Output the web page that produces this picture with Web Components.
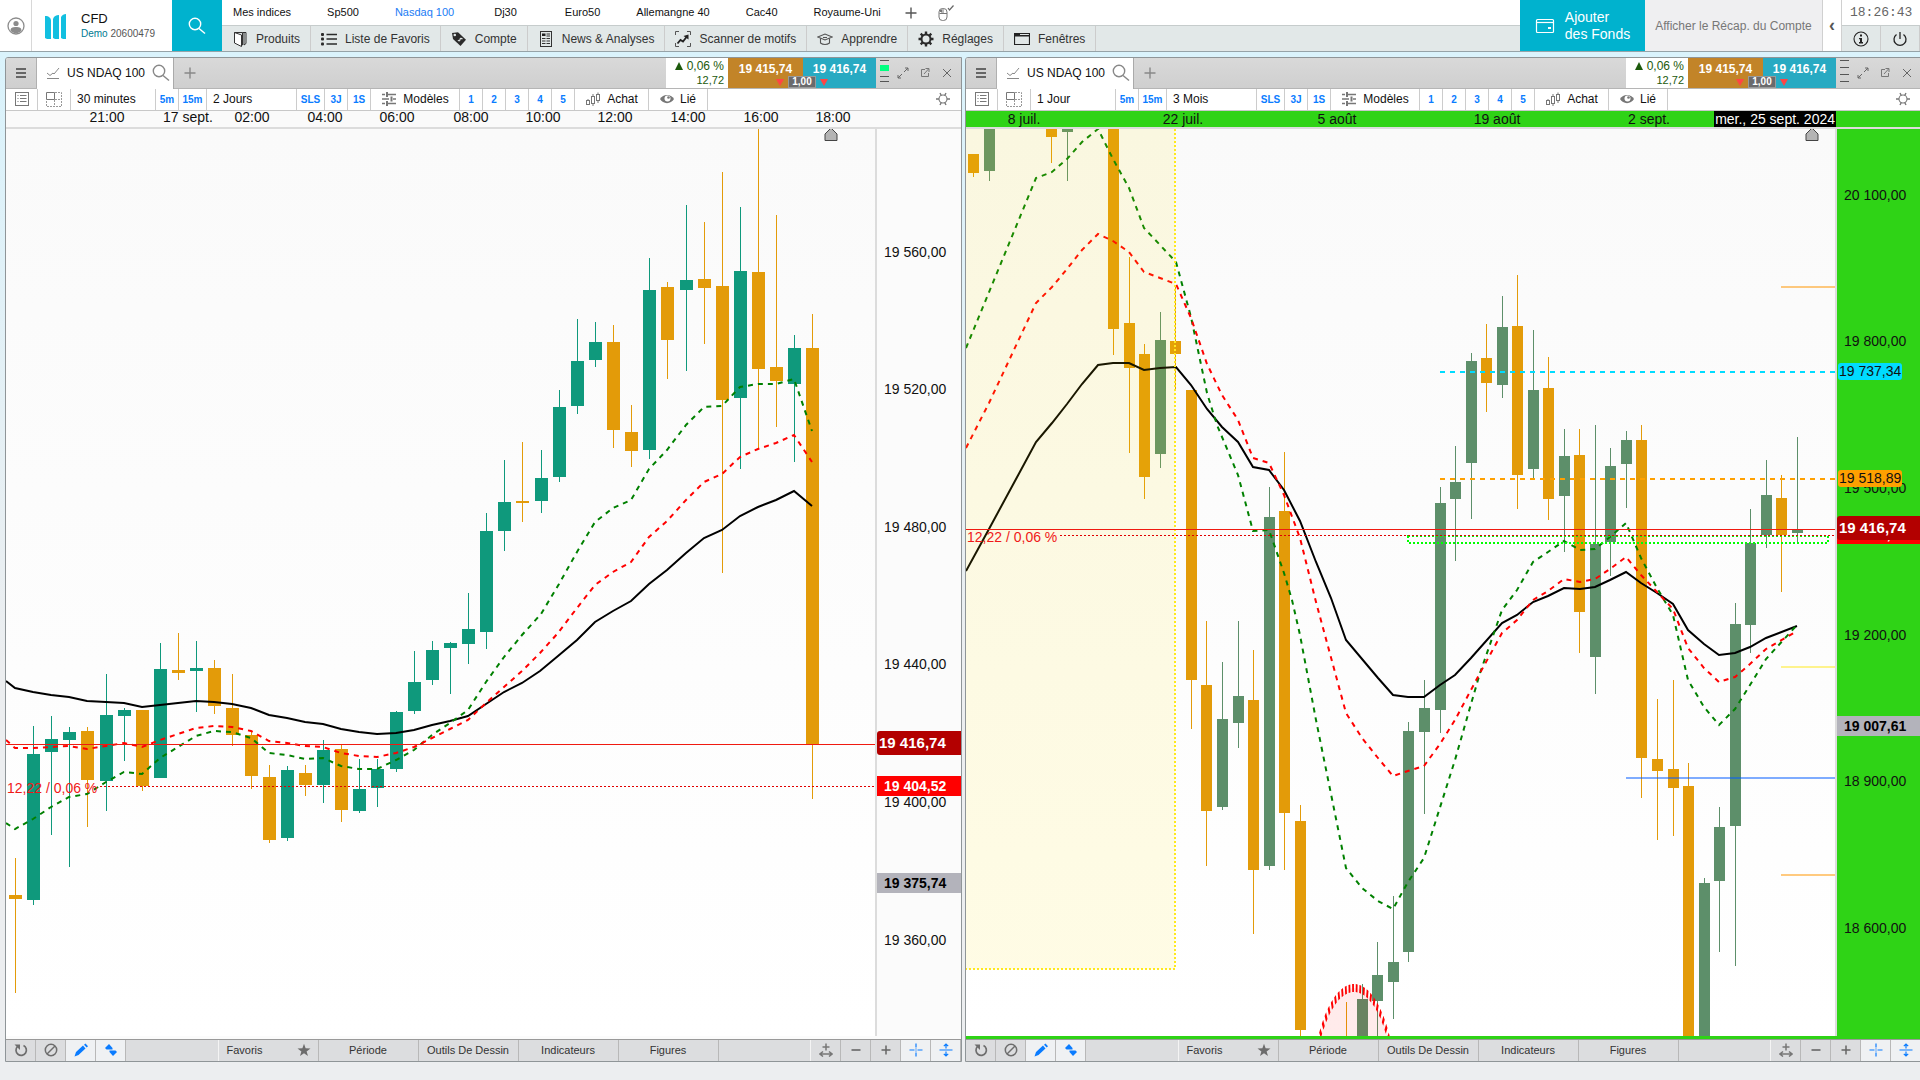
<!DOCTYPE html>
<html lang="fr">
<head>
<meta charset="utf-8">
<title>CFD - US NDAQ 100</title>
<style>
  html, body { height: 100%; }
  body {
    margin: 0;
    overflow: hidden;
    background: #eceef0;
    font-family: "Liberation Sans", Arial, sans-serif;
    font-size: 12px;
    color: #111;
  }
</style>
</head>
<body>
<trading-app></trading-app>

<script>
// ---------- icons ----------
const icons = {
  user: [18, '<circle cx="9" cy="9" r="8" fill="none" stroke="#8c8c8c" stroke-width="1.3"/><circle cx="9" cy="6.5" r="2.6" fill="#8c8c8c"/><path d="M3.5 13.5c0-3 2.5-3.5 5.500-3.500s5.500.5 5.500 3.500c-1.300 1.800-3.300 2.800-5.500 2.800s-4.200-1-5.500-2.800z" fill="#8c8c8c"/>'],
  logo: [26, '<g fill="#12bfe0"><path d="M2 3c4 0 6 2 6 5v18H4l-2-1z"/><path d="M10 6c1-3 3-4 6-4v24h-4l-2-1z"/><path d="M18 4c1-2 3-3 5-3v25h-3l-2-1z"/></g>'],
  search: [18, '<circle cx="7" cy="7" r="5.700" fill="none" stroke="currentColor" stroke-width="1.400"/><path d="M11 11.500l6 5" stroke="currentColor" stroke-width="1.500"/>'],
  products: [16, '<g fill="none" stroke="#333"><path d="M2.500 1.500l7 2.500v11.500l-7-3.500z" fill="#fff"/><path d="M2.500 1.500h8v2M9.500 14h1V2.500M10.500 1.500h3.500v11l-2 1.500V1.500"/></g>'],
  list: [16, '<g stroke="#2b2b2b" stroke-width="1.400"><path d="M5.500 3.500H16M5.500 8H16M5.500 13H16"/></g><g fill="#2b2b2b"><rect y="2" width="3" height="3" rx="1"/><rect y="6.500" width="3" height="3" rx="1"/><rect y="11.500" width="3" height="3" rx="1"/></g>'],
  tag: [16, '<path d="M1 2l6-.8 8 7.600-5.500 6.200L2 8z" fill="#2b2b2b"/><circle cx="3.800" cy="4" r="1.300" fill="#e2e8e8"/><path d="M7 9c1 1.500 2 .5 2-.5s1-2 2.500-.3" fill="none" stroke="#e2e8e8" stroke-width="1.200"/>'],
  news: [16, '<rect x="2.500" y=".5" width="11" height="15" fill="none" stroke="#333"/><rect x="4" y="2.500" width="3.500" height="2.500" fill="#222"/><path d="M8.500 3h3.500M8.500 5h3.500M4 7.500h3.500M8.500 7.500h3.500M4 10h3.500M8.500 10h3.500M4 12.500h3.500M8.500 12.500h3.500" stroke="#333"/>'],
  scan: [16, '<path d="M.5 4V.5H4M12 .5h3.500V4M15.500 12v3.500H12M4 15.500H.5V12" fill="none" stroke="#555"/><path d="M2.500 12.500l3-3.500 2.500 1.500 3.500-4.500" fill="none" stroke="#222" stroke-width="1.800"/><path d="M13.500 3.500v5l-5-3.500z" fill="#222"/>'],
  learn: [16, '<g fill="none" stroke="#555" stroke-width="1.100"><path d="M.8 6L8 3l7.200 3L8 9z"/><path d="M3.500 7.300V12c2.500 2 6.500 2 9 0V7.300M6 6.500h4"/></g>'],
  gear: [16, '<circle cx="8" cy="8" r="4.500" fill="none" stroke="#2b2b2b" stroke-width="2"/><g stroke="#2b2b2b" stroke-width="2.400"><path d="M8 .5v2.500M8 13v2.500M.5 8H3M13 8h2.500M2.700 2.700l1.800 1.800M11.500 11.500l1.800 1.800M13.300 2.700l-1.800 1.800M4.500 11.500l-1.800 1.800"/></g>'],
  window: [16, '<path d="M.5 2.500h15v11H.5z" fill="none" stroke="#222" stroke-width="1.200"/><path d="M0 2h6v2h10v1.500H0z" fill="#222"/>'],
  plus: [12, '<path d="M6 .5v11M.5 6h11" stroke="currentColor" stroke-width="1.400"/>'],
  mouse: [16, '<rect x="1" y="3.500" width="8" height="12" rx="3.500" fill="none" stroke="#777"/><path d="M1.500 8.500h7.500M5 3.500v5M2.500 7V5M3.500 7.500V4.500" stroke="#777"/><path d="M10 3l1.500 2 4-4.500" fill="none" stroke="#666" stroke-width="1.200"/>'],
  wallet: [20, '<g fill="none" stroke="#fff" stroke-width="1.200"><rect x="1.500" y="3.500" width="17" height="13" rx="1"/><path d="M1.500 6.500h17"/></g><rect x="13" y="11" width="3" height="2" fill="#fff"/>'],
  info: [16, '<circle cx="8" cy="8" r="7" fill="none" stroke="#222" stroke-width="1.100"/><path d="M7 3.500h2v2H7zM6 7h3v4h1v1.500H6V11h1V8.200H6z" fill="#222"/>'],
  power: [16, '<path d="M8 1v7M4.500 3.500a6 6 0 1 0 7 0" fill="none" stroke="#222" stroke-width="1.300"/>'],
  burger: [12, '<path d="M1 2h10M1 6h10M1 10h10" stroke="#666" stroke-width="2"/>'],
  trend: [14, '<path d="M1 7l3 2.500 3-2.500 1 1 5-6" fill="none" stroke="#888"/><path d="M1 12.500h12" stroke="#888"/>'],
  rows: [14, '<rect x=".5" y=".5" width="13" height="13" fill="none" stroke="#777"/><path d="M2.500 3.500h1M2.500 6.500h1M2.500 9.500h1M5 3.500h6.500M5 6.500h6.500M5 9.500h6.500" stroke="#777"/>'],
  layout: [16, '<path d="M.5 1.500h8v7h-8z" fill="none" stroke="#777"/><path d="M9 1.500h6.500v14H.5V9M8.500 9v6M9 8.500h6" fill="none" stroke="#999" stroke-dasharray="2 1"/>'],
  sliders: [16, '<path d="M1 3.500h3M7 3.500h8M1 8h7M12 8h3M1 12.500h3M7 12.500h8" stroke="#777" stroke-width="1.500"/><path d="M6 1v5M10.500 5.500v5M6 10v5" stroke="#777" stroke-width="2"/>'],
  candles: [16, '<g fill="none" stroke="#777"><rect x="1.500" y="9.500" width="3" height="4"/><rect x="6.500" y="5.500" width="3" height="7"/><rect x="11.500" y="3.500" width="3" height="6"/><path d="M3 8v1.500M8 3v2.500M8 12.500V15M13 1.500v2M13 9.500V12"/></g>'],
  eye: [14, '<path d="M0 7c3-5.500 11-5.500 14 0-3 5.500-11 5.500-14 0z" fill="#777"/><circle cx="7.500" cy="6.500" r="3" fill="#fff"/><circle cx="8.500" cy="5.500" r="1.300" fill="#777"/>'],
  cog: [14, '<circle cx="7" cy="7" r="4" fill="none" stroke="#777" stroke-width="1.100"/><path d="M4 1l1.300 2.500M10 1L8.700 3.500M4 13l1.300-2.500M10 13l-1.300-2.500M0 7h3M11 7h3" stroke="#777" stroke-width="1.400"/>'],
  expand: [12, '<path d="M7 5l4-4M8 1h3v3M5 7l-4 4M1 8v3h3" fill="none" stroke="#666"/>'],
  popout: [12, '<path d="M6 2.500H2.500v7h7V6M5 7l4.500-5M6.500 1.500H10V5" fill="none" stroke="#777"/>'],
  close: [12, '<path d="M2 2l8 8M10 2l-8 8" stroke="#666"/>'],
  refresh: [14, '<path d="M9.500 2.500A5.200 5.200 0 1 1 3.500 3.500" fill="none" stroke="#6d6d6d" stroke-width="1.700"/><path d="M.5 1.500h5.500V7z" fill="#6d6d6d"/>'],
  forbid: [14, '<circle cx="7" cy="7" r="5.700" fill="none" stroke="#6d6d6d" stroke-width="1.500"/><path d="M3 11l8-8" stroke="#6d6d6d" stroke-width="1.500"/>'],
  pencil: [14, '<path d="M.5 13.500l1.500-4.500L9 2.500l2.500 3-7 6.500zM10 1.700L11.500.5l2.500 2.800-1.300 1.200z" fill="#0a7cff"/>'],
  updown: [14, '<path d="M1 5l4-4 3.500 4v1.500H2.500z" fill="#0a7cff"/><path d="M13 9l-4 4-3.500-4V7.500h6z" fill="#0a7cff"/>'],
  star: [14, '<path d="M7 .8l1.600 4.400 4.900.2-3.900 3 1.400 4.600L7 10.300 3 13l1.400-4.600-3.900-3 4.900-.2z" fill="#6d6d6d"/>'],
  fit: [14, '<path d="M7 .5v7M3.500 4h7M1 11h12M4 8.500L1 11l3 2.500M10 8.500l3 2.500-3 2.500" fill="none" stroke="#777" stroke-width="1.500"/>'],
  minus: [12, '<path d="M1.500 6h9" stroke="#666" stroke-width="1.600"/>'],
  add: [12, '<path d="M6 1.500v9M1.500 6h9" stroke="#666" stroke-width="1.500"/>'],
  cross: [14, '<path d="M7 .5v4M7 9.500v4M.5 7h5M8.500 7h5M7 5.500v1M7 7.500v1" stroke="#0a7cff" stroke-width="1.200"/>'],
  vresize: [14, '<path d="M.5 7h13M7 1v4.500M7 8.500V13M4.800 3.200L7 1l2.200 2.200M4.800 10.800L7 13l2.200-2.200" fill="none" stroke="#0a7cff" stroke-width="1.200"/>']
};

class UiIcon extends HTMLElement {
  constructor() {
    super();
    this.attachShadow({ mode: "open" });
  }

  connectedCallback() {
    const [size, body] = icons[this.getAttribute("name")];
    this.shadowRoot.innerHTML = `
      <style>
        :host { display: inline-flex; flex: none; }
        svg { display: block; }
      </style>
      <svg width="${size}" height="${size}" viewBox="0 0 ${size} ${size}" aria-hidden="true">${body}</svg>`;
  }
}
customElements.define("ui-icon", UiIcon);

// ---------- one cell of a bar, used in the menu and in the chart toolbars ----------
const barCell = document.createElement("template");
barCell.innerHTML = `
  <style>
    :host { display: flex; flex: none; box-sizing: border-box; border-right: 1px solid #ccc; }
    button {
      display: flex;
      flex: 1;
      align-items: center;
      justify-content: center;
      gap: var(--cell-gap, 6px);
      margin: 0;
      padding: 0 var(--cell-pad, 0px) var(--cell-bottom, 0px);
      border: 0;
      background: none;
      font: inherit;
      color: inherit;
      white-space: nowrap;
    }
    :host([start]) button { justify-content: flex-start; }
    :host([quick]) { width: 23px; color: #0a7cff; font-size: 10px; font-weight: bold; }
    :host([square]) { width: 30px; }
    :host([on]) { background: #eff1f3; }
  </style>
  <button type="button"><slot></slot></button>
`;
customElements.define(
  "bar-cell",
  class BarCell extends HTMLElement {
    constructor() {
      super();
      this.attachShadow({ mode: "open" }).appendChild(barCell.content.cloneNode(true));
    }
  }
);

// ---------- header ----------
const header = document.createElement("template");
header.innerHTML = `
  <style>
    :host {
      display: flex;
      height: 51px;
      background: #fff;
      border-bottom: 1px solid #96a3a8;
    }
    button { border: 0; margin: 0; font: inherit; padding: 0; display: flex; align-items: center; justify-content: center; }
    .user { width: 32px; background: #fff; border-right: 1px solid #d8d8d8; box-sizing: border-box; }
    .account { display: flex; width: 140px; gap: 12px; align-items: center; box-sizing: border-box; padding-left: 11px; }
    .account h1 { margin: 0; font-size: 13px; line-height: 16px; font-weight: normal; color: #111; }
    .account p { margin: 0; font-size: 10px; line-height: 14px; color: #555; }
    .account p a { color: #007a92; text-decoration: none; }
    .search { width: 50px; background: #00b2ce; color: #fff; }
    .main { flex: 1; min-width: 0; display: flex; flex-direction: column; }
    .indices { display: flex; height: 25px; align-items: center; font-size: 11px; line-height: 25px; color: #888; border-bottom: 1px solid #c6cccc; }
    .indices a { color: #111; text-decoration: none; padding: 0 18px; height: 25px; white-space: nowrap; }
    .indices a:first-child { padding-left: 11px; }
    .indices a.on { color: #1a7cf5; }
    .indices a.short { padding: 0 30px 0 22px; }
    .indices button { background: none; color: #555; width: 24px; height: 25px; }
    .indices button + button { width: 46px; }
    .menu { display: flex; height: 25px; background: #e2e8e8; color: #333; --cell-pad: 10px; --cell-gap: 8px; }
    .funds { width: 125px; gap: 10px; background: #00b2ce; color: #fff; font-size: 14px; line-height: 17px; text-align: left; }
    .recap { width: 177px; background: #efeff1; color: #777; font-size: 12px; }
    .fold { width: 20px; background: #fff; color: #555; font-size: 18px; font-weight: bold; border: 1px solid #d0d0d0; border-width: 0 1px; }
    .side { width: 78px; }
    .clock { height: 25px; border-bottom: 1px solid #c6cccc; font: 13px/26px "Liberation Mono", monospace; text-align: center; color: #666; padding: 0 8px; }
    .pair { display: flex; height: 25px; background: #e2e8e8; }
    .pair bar-cell { flex: 1; }
  </style>
  <button class="user" aria-label="Profil"><ui-icon name="user"></ui-icon></button>
  <div class="account">
    <ui-icon name="logo"></ui-icon>
    <div><h1>CFD</h1><p><a href="#demo">Demo</a> 20600479</p></div>
  </div>
  <button class="search" aria-label="Rechercher"><ui-icon name="search"></ui-icon></button>
  <div class="main">
    <nav class="indices">
      <a href="#">Mes indices</a><a href="#">Sp500</a><a href="#" class="on">Nasdaq 100</a><a href="#" class="short">Dj30</a><a href="#">Euro50</a><a href="#">Allemangne 40</a><a href="#">Cac40</a><a href="#">Royaume-Uni</a>
      <button aria-label="Ajouter"><ui-icon name="plus"></ui-icon></button>
      <button aria-label="Souris"><ui-icon name="mouse"></ui-icon></button>
    </nav>
    <nav class="menu">
      <bar-cell><ui-icon name="products"></ui-icon>Produits</bar-cell>
      <bar-cell><ui-icon name="list"></ui-icon>Liste de Favoris</bar-cell>
      <bar-cell><ui-icon name="tag"></ui-icon>Compte</bar-cell>
      <bar-cell><ui-icon name="news"></ui-icon>News &amp; Analyses</bar-cell>
      <bar-cell><ui-icon name="scan"></ui-icon>Scanner de motifs</bar-cell>
      <bar-cell><ui-icon name="learn"></ui-icon>Apprendre</bar-cell>
      <bar-cell><ui-icon name="gear"></ui-icon>Réglages</bar-cell>
      <bar-cell><ui-icon name="window"></ui-icon>Fenêtres</bar-cell>
    </nav>
  </div>
  <button class="funds"><ui-icon name="wallet"></ui-icon><span>Ajouter<br>des Fonds</span></button>
  <button class="recap">Afficher le Récap. du Compte</button>
  <button class="fold" aria-label="Replier">‹</button>
  <div class="side">
    <div class="clock">18:26:43</div>
    <div class="pair">
      <bar-cell><ui-icon name="info"></ui-icon></bar-cell>
      <bar-cell><ui-icon name="power"></ui-icon></bar-cell>
    </div>
  </div>
`;
customElements.define(
  "app-header",
  class AppHeader extends HTMLElement {
    constructor() {
      super();
      this.attachShadow({ mode: "open" }).appendChild(header.content.cloneNode(true));
    }
  }
);

// ---------- chart data ----------
// All the points share one space: the plot is 869 x 907, its corner is at 6,129.
const PLOT = { x: 6, y: 129, w: 869, h: 907 };

// candle: left edge, high, body top, body bottom, low, u(p) or d(own)
const charts = {
  m30: {
    period: "30 minutes",
    range: "2 Jours",
    up: "#0f997c",
    down: "#e39b09",
    width: 13,
    marker: 831,
    ladder: true,
    times: [[107, "21:00"], [188, "17 sept."], [252, "02:00"], [325, "04:00"], [397, "06:00"], [471, "08:00"], [543, "10:00"], [615, "12:00"], [688, "14:00"], [761, "16:00"], [833, "18:00"]],
    prices: [[252, "19 560,00"], [389, "19 520,00"], [527, "19 480,00"], [664, "19 440,00"], [802, "19 400,00"], [940, "19 360,00"]],
    tags: [[743, "19 416,74", "last"], [786, "19 404,52", "open"], [883, "19 375,74", "cursor"]],
    note: 788,
    last: 744.5,
    open: 786.5,
    candles: `9 858 895 899 993 d|27 726 754 900 905 u|45 716 739 752 835 u|63 727 732 740 867 u|81 727 731 780 827 d
      |100 674 715 781 811 u|118 708 710 716 761 u|136 710 710 786 791 d|154 643 669 778 778 u|172 633 670 673 680 d
      |190 641 668 671 712 u|208 660 668 706 714 d|226 674 708 735 746 d|245 731 735 776 789 d|263 765 777 840 843 d
      |281 766 770 838 841 u|299 765 773 785 796 d|317 740 750 785 803 u|335 745 749 810 822 d|353 759 789 811 813 u
      |371 759 769 788 807 u|390 711 712 769 772 u|408 651 682 711 714 u|426 641 650 680 685 u|444 642 643 648 694 u
      |462 593 629 644 664 u|480 513 531 632 649 u|498 460 502 531 551 u|516 442 501 503 522 d|535 450 478 501 513 u
      |553 390 407 477 482 u|571 319 361 406 414 u|589 322 342 360 367 u|607 325 342 430 448 d|625 405 432 451 467 d
      |643 258 290 450 459 u|661 282 287 340 379 d|680 205 280 290 371 u|698 222 279 288 344 d|716 172 286 400 573 d
      |734 207 271 398 469 u|752 128 272 369 449 d|770 215 367 381 427 d|788 335 348 384 462 u|806 314 348 744 799 d`,
    black: "6,681 15,688 33,692 51,695 69,697 87,701 106,702 124,703 142,707 160,705 178,703 196,701 214,702 232,704 251,708 269,715 287,718 305,722 323,724 341,729 359,732 377,734 396,733 414,730 432,725 450,721 468,716 486,704 504,692 522,683 540,671 558,656 577,640 595,622 613,611 631,601 649,584 667,570 686,553 704,538 722,530 740,516 758,507 776,500 794,491 812,506",
    red: "6,740 15,748 33,748 51,747 69,746 87,749 106,746 124,743 142,747 160,740 178,734 196,728 214,726 232,727 251,731 269,741 287,743 305,746 323,747 341,753 359,756 377,757 396,753 414,747 432,738 450,729 468,720 486,703 504,687 522,671 540,653 558,633 577,608 595,585 613,572 631,562 649,537 667,521 686,500 704,482 722,474 740,457 758,449 776,443 794,435 812,462",
    green: "6,823 15,829 33,819 51,807 69,797 87,794 106,782 124,772 142,774 160,758 178,747 196,736 214,731 232,732 251,738 269,753 287,755 305,759 323,758 341,766 359,769 377,769 396,760 414,750 432,735 450,723 468,710 486,682 504,657 522,635 541,614 559,584 577,552 595,522 613,508 631,500 649,469 667,450 686,425 704,407 722,406 740,387 758,384 776,384 794,379 812,431",
    drawings: ""
  },
  d1: {
    period: "1 Jour",
    range: "3 Mois",
    up: "#5d8f6a",
    down: "#e39b09",
    width: 11,
    marker: 852,
    times: [[64, "8 juil."], [223, "22 juil."], [377, "5 août"], [537, "19 août"], [689, "2 sept."]],
    date: "mer., 25 sept. 2024",
    prices: [[195, "20 100,00"], [341, "19 800,00"], [488, "19 500,00"], [635, "19 200,00"], [781, "18 900,00"], [928, "18 600,00"]],
    tags: [[534, "19 404,52", "open"], [371, "19 737,34", "cyan"], [478, "19 518,89", "orange"], [528, "19 416,74", "last"], [726, "19 007,61", "cursor"]],
    note: 537,
    last: 529.5,
    open: 535.5,
    candles: `8 154 154 173 177 d|24 120 120 171 181 u|86 120 120 137 163 d|102 120 120 132 181 u|148 120 120 329 355 d
      |164 257 323 368 453 d|179 344 354 477 499 d|195 312 340 454 468 u|210 285 341 354 391 d|226 390 390 680 729 d
      |241 621 685 811 866 d|257 662 719 807 810 u|273 621 696 723 748 u|288 650 700 870 934 d|304 487 517 866 870 u
      |319 452 511 813 870 d|335 805 821 1030 1040 d|381 1002 1038 1040 1040 d|397 984 999 1040 1040 u|412 942 975 1001 1040 u
      |428 896 962 982 1019 u|443 722 731 952 962 u|459 680 708 732 814 u|475 487 503 710 733 u|490 446 482 499 561 u
      |506 353 361 463 519 u|521 324 358 383 412 d|537 296 327 385 398 u|552 275 326 475 509 d|568 330 390 469 478 u
      |583 357 388 499 520 d|599 429 456 496 552 u|614 429 455 612 653 d|630 425 544 657 694 u|645 448 466 542 576 u
      |661 431 440 464 508 u|676 425 440 758 798 d|692 699 759 771 840 d|708 680 769 788 836 d|723 763 786 1040 1040 d
      |739 878 883 1040 1040 u|754 807 827 881 952 u|770 603 624 826 966 u|785 509 543 625 653 u|801 460 495 535 548 u
      |816 475 498 535 592 d|832 437 530 533 544 u`,
    black: "6,571 29,529 76,442 92,423 107,404 122,384 138,365 153,363 169,363 184,370 200,368 216,367 231,385 247,409 262,427 278,442 293,467 309,470 324,490 340,521 356,562 371,598 386,640 418,678 433,695 448,697 464,697 480,685 495,675 511,658 542,623 557,615 573,602 588,596 604,588 620,589 635,587 650,580 666,572 681,583 697,593 713,604 728,630 744,644 759,655 775,653 790,647 806,638 837,626",
    red: "6,448 29,403 76,303 92,287 107,269 122,250 138,234 153,241 169,252 184,272 200,278 216,284 231,318 247,364 262,395 278,420 293,458 309,463 324,495 340,538 356,602 386,713 402,738 418,758 433,776 448,771 464,766 480,744 495,720 520,673 542,633 557,620 573,600 588,591 604,579 620,582 635,579 650,569 666,557 681,575 697,592 713,609 728,648 744,668 759,682 775,677 790,664 806,649 837,631",
    green: "6,348 76,178 92,172 107,159 122,142 138,129 153,159 169,188 184,228 200,245 216,262 231,317 247,393 257,425 278,475 293,531 309,530 324,573 332,600 340,635 356,720 386,868 402,888 418,901 433,909 448,882 464,858 495,760 511,704 520,673 542,610 557,590 573,562 588,552 604,541 620,550 635,549 650,537 666,523 681,558 697,588 713,615 728,680 744,707 759,725 775,709 790,685 806,659 837,625",
    drawings: `
      <path d="M480 372H876" stroke="#00dcff" stroke-width="2" stroke-dasharray="5 5"/>
      <path d="M480 479H876" stroke="#ffa000" stroke-width="2" stroke-dasharray="5 5"/>
      <path d="M6 129H215V969H6z" fill="#ffdd00" fill-opacity=".1"/>
      <path d="M215 129V969H6" fill="none" stroke="#ffe91e" stroke-width="2" stroke-dasharray="2 2"/>
      <path d="M448 536H868V543H448z" fill="none" stroke="#00ff00" stroke-width="2" stroke-dasharray="2 2"/>
      <path d="M821 287H876M821 875H876" stroke="#ff9600" stroke-opacity=".5" stroke-width="2"/>
      <path d="M821 667H876" stroke="#ffe91e" stroke-opacity=".5" stroke-width="2"/>
      <path d="M666 778H876" stroke="#005aff" stroke-opacity=".5" stroke-width="2"/>
      <g transform="translate(394 1108) scale(.3 1)">
        <ellipse rx="142" ry="120" fill="#f00" fill-opacity=".08" stroke="#f00" stroke-width="8" stroke-dasharray="6 6"/>
      </g>`
  }
};

// ---------- candle chart ----------
class CandleChart extends HTMLElement {
  constructor() {
    super();
    this.attachShadow({ mode: "open" });
  }

  candle(text, c) {
    const [x, high, top, bottom, low, dir] = text.trim().split(" ");
    const mid = Number(x) + c.width / 2;
    const color = dir === "u" ? c.up : c.down;
    return `
      <path d="M${mid} ${high}V${low}" stroke="${color}"/>
      <rect x="${x}" y="${top}" width="${c.width}" height="${bottom - top}" fill="${color}"/>`;
  }

  connectedCallback() {
    const c = charts[this.getAttribute("data")];
    const end = PLOT.x + PLOT.w;
    const m = c.marker;
    this.shadowRoot.innerHTML = `
      <style>
        :host { display: block; position: relative; overflow: hidden; background: linear-gradient(#fafafa, #fff); }
        svg { display: block; width: 100%; height: 100%; }
        polyline { fill: none; stroke-width: 2; }
        .dashed { stroke-dasharray: 5 5; }
        span {
          position: absolute;
          left: 1px;
          margin-top: -8px;
          font-size: 14px;
          line-height: 16px;
          color: #f01818;
        }
      </style>
      <svg viewBox="${PLOT.x} ${PLOT.y} ${PLOT.w} ${PLOT.h}" preserveAspectRatio="none">
        ${c.candles.split("|").map(t => this.candle(t, c)).join("")}
        <polyline points="${c.black}" stroke="#000"/>
        <polyline class="dashed" points="${c.green}" stroke="#008000"/>
        <polyline class="dashed" points="${c.red}" stroke="#f00"/>
        ${c.drawings}
        <path d="M6 ${c.last}H${end}" stroke="#f01a10"/>
        <path d="M100 ${c.open}H${end}" stroke="#e00000" stroke-dasharray="2 2"/>
        <path d="M${m - 6} 140.500V134l6-6 6 6v6.500z" fill="#b4b4b4" stroke="#444"/>
      </svg>
      <span style="top: ${(c.note - PLOT.y) / PLOT.h * 100}%">12,22 / 0,06 %</span>`;
  }
}
customElements.define("candle-chart", CandleChart);

// ---------- axes ----------
class TimeAxis extends HTMLElement {
  constructor() {
    super();
    this.attachShadow({ mode: "open" });
  }

  connectedCallback() {
    const c = charts[this.getAttribute("data")];
    const labels = c.times.map(([x, t]) => `<span style="left: ${(x - PLOT.x) / PLOT.w * 100}%">${t}</span>`).join("");
    this.shadowRoot.innerHTML = `
      <style>
        :host {
          display: block;
          height: 16px;
          padding-right: 86px;
          background: var(--axis, #fafafa);
          border-bottom: 2px solid #dcdcdc;
          font-size: 14px;
          line-height: var(--time-line, 13px);
          white-space: nowrap;
        }
        div { position: relative; height: 16px; }
        span { position: absolute; width: 80px; margin-left: -40px; text-align: center; }
        b { position: absolute; right: -1px; padding: 0 1px; font-weight: normal; background: #000; color: #fff; line-height: 16px; }
      </style>
      <div>${labels}${c.date ? `<b>${c.date}</b>` : ""}</div>`;
  }
}
customElements.define("time-axis", TimeAxis);

class PriceAxis extends HTMLElement {
  constructor() {
    super();
    this.attachShadow({ mode: "open" });
  }

  connectedCallback() {
    const c = charts[this.getAttribute("data")];
    const top = y => `top: ${(y - PLOT.y) / PLOT.h * 100}%`;
    this.shadowRoot.innerHTML = `
      <style>
        :host {
          display: block;
          position: relative;
          box-sizing: border-box;
          width: 86px;
          border-left: 2px solid #dcdcdc;
          background: var(--axis, #fbfbfb);
          font-size: 14px;
          overflow: hidden;
        }
        span { position: absolute; left: 7px; line-height: 16px; margin-top: -8px; }
        .last, .open, .cursor { left: 0; right: 0; padding-left: 7px; font-weight: bold; }
        .last { background: #b30000; color: #fff; font-size: 15px; line-height: 24px; margin-top: -12px; padding-left: 2px; border-radius: 3px 0 0 3px; }
        .open { background: #f00; color: #fff; line-height: 20px; margin-top: -10px; }
        .cursor { background: #b3b3bb; line-height: 20px; margin-top: -10px; color: #000; }
        .cyan, .orange { left: 1px; padding: 0 1px; border-radius: 3px; background: #00dcff; line-height: 17px; }
        .orange { background: #ffa000; }
      </style>
      ${c.prices.map(([y, t]) => `<span style="${top(y)}">${t}</span>`).join("")}
      ${c.tags.map(([y, t, kind]) => `<span class="${kind}" style="${top(y)}">${t}</span>`).join("")}`;
  }
}
customElements.define("price-axis", PriceAxis);

// ---------- quote box of the tab bar ----------
class QuoteBox extends HTMLElement {
  constructor() {
    super();
    this.attachShadow({ mode: "open" });
  }

  connectedCallback() {
    this.shadowRoot.innerHTML = `
      <style>
        :host { display: flex; height: 30px; }
        .change { width: 62px; box-sizing: border-box; padding: 1px 4px 0 0; background: #fff; color: #1c5a0c; text-align: right; line-height: 14px; }
        .change small { display: block; font-size: 11px; }
        .change i { display: inline-block; border: 4px solid transparent; border-top: 0; border-bottom: 8px solid #1c5a0c; margin-right: 4px; }
        .deal { display: flex; position: relative; }
        button { width: 75px; margin: 0; padding: 0 0 9px; border: 0; font: bold 12px "Liberation Sans", Arial, sans-serif; color: #fff; background: #c28428; }
        button + button { width: 73px; background: #28aac2; }
        .lot { position: absolute; left: 48px; bottom: 0; display: flex; align-items: center; gap: 4px; }
        .lot b { width: 26px; border: 1px solid #999; box-sizing: content-box; background: #6a6a6c; color: #fff; font-size: 10px; line-height: 10px; text-align: center; }
        .lot i { border: 4px solid transparent; border-bottom: 0; border-top: 7px solid #ff4444; }
        .ladder { display: flex; flex-direction: column; justify-content: space-between; width: 9px; margin: 2px 0 6px 4px; }
        .ladder hr { margin: 0; border: 0; height: 1px; width: 9px; background: #555; }
        .ladder hr.full { height: 6px; background: #00ff80; }
        .tools { display: flex; align-items: center; gap: 10px; padding: 0 8px; }
        .tools button { width: 12px; padding: 0; background: none; display: flex; }
      </style>
      <div class="change"><i></i>0,06 %<small>12,72</small></div>
      <div class="deal">
        <button type="button">19 415,74</button><button type="button">19 416,74</button>
        <div class="lot"><i></i><b>1,00</b><i></i></div>
      </div>
      <div class="ladder"><hr><hr class="${this.hasAttribute("ladder") ? "full" : ""}"><hr><hr></div>
      <div class="tools">
        <button aria-label="Agrandir"><ui-icon name="expand"></ui-icon></button>
        <button aria-label="Détacher"><ui-icon name="popout"></ui-icon></button>
        <button aria-label="Fermer"><ui-icon name="close"></ui-icon></button>
      </div>`;
  }
}
customElements.define("quote-box", QuoteBox);

// ---------- chart window ----------
class ChartPanel extends HTMLElement {
  constructor() {
    super();
    this.attachShadow({ mode: "open" });
  }

  connectedCallback() {
    const id = this.getAttribute("data");
    const c = charts[id];
    const quick = list => list.map(t => `<bar-cell quick>${t}</bar-cell>`).join("");
    this.shadowRoot.innerHTML = `
      <style>
        :host { display: flex; flex-direction: column; min-width: 0; border: 1px solid #8f9598; border-radius: 3px 0 0 0; overflow: hidden; background: #fff; }
        .tabs { display: flex; height: 30px; background: linear-gradient(#d9d9d9, #cfcfcf); border-bottom: 1px solid #b5b5b5; }
        .tabs button { display: flex; align-items: center; justify-content: center; margin: 0; padding: 0; border: 0; background: none; color: #888; }
        .tabs .menu { width: 31px; border-right: 1px solid #b0b0b0; box-sizing: border-box; }
        .tab { display: flex; align-items: center; gap: 7px; width: 137px; height: 31px; box-sizing: border-box; padding: 0 0 2px 9px; background: #fff; border-right: 1px solid #aaa; white-space: nowrap; }
        .tabs .add { width: 32px; }
        quote-box { margin-left: auto; }
        .tools { display: flex; height: 21px; border-bottom: 1px solid #c8c8c8; background: #fff; --cell-bottom: 1px; }
        .tools .cog { margin-left: auto; width: 36px; border: 0; }
        .tools .w0 { width: 33px; }
        .w1 { width: 85px; --cell-pad: 6px; }
        .w2 { width: 90px; --cell-pad: 6px; }
        .body { flex: 1; min-height: 0; display: flex; border-bottom: 3px solid var(--axis, #fbfbfb); }
        candle-chart { flex: 1; min-width: 0; }
        footer { display: flex; height: 21px; background: #dcdddf; border-top: 1px solid #999; font-size: 11px; color: #333; --cell-bottom: 1px; }
        footer bar-cell { border-color: #b8b8b8; }
        footer i { flex: 1; box-sizing: border-box; border-right: 1px solid #f4f4f4; }
        footer .named { width: 100px; }
        footer .fav { --cell-pad: 8px; --cell-gap: 34px; }
      </style>
      <div class="tabs">
        <button class="menu" aria-label="Menu"><ui-icon name="burger"></ui-icon></button>
        <div class="tab"><ui-icon name="trend"></ui-icon>US NDAQ 100<button aria-label="Rechercher"><ui-icon name="search"></ui-icon></button></div>
        <button class="add" aria-label="Nouvel onglet"><ui-icon name="plus"></ui-icon></button>
        <quote-box ${c.ladder ? "ladder" : ""}></quote-box>
      </div>
      <div class="tools">
        <bar-cell style="width: 32px"><ui-icon name="rows"></ui-icon></bar-cell>
        <bar-cell class="w0"><ui-icon name="layout"></ui-icon></bar-cell>
        <bar-cell start class="w1">${c.period}</bar-cell>
        <bar-cell quick>5m</bar-cell>
        <bar-cell quick style="width: 28px">15m</bar-cell>
        <bar-cell start class="w2">${c.range}</bar-cell>
        <bar-cell quick style="width: 28px">SLS</bar-cell>
        ${quick(["3J", "1S"])}
        <bar-cell style="width: 89px">
          <ui-icon name="sliders"></ui-icon>Modèles
        </bar-cell>
        ${quick([1, 2, 3, 4, 5])}
        <bar-cell style="width: 74px"><ui-icon name="candles"></ui-icon>Achat</bar-cell>
        <bar-cell style="width: 59px"><ui-icon name="eye"></ui-icon>Lié</bar-cell>
        <bar-cell class="cog"><ui-icon name="cog"></ui-icon></bar-cell>
      </div>
      <time-axis data="${id}"></time-axis>
      <div class="body">
        <candle-chart data="${id}"></candle-chart>
        <price-axis data="${id}"></price-axis>
      </div>
      <footer>
        <bar-cell square><ui-icon name="refresh"></ui-icon></bar-cell>
        <bar-cell square><ui-icon name="forbid"></ui-icon></bar-cell>
        <bar-cell square on><ui-icon name="pencil"></ui-icon></bar-cell>
        <bar-cell square on><ui-icon name="updown"></ui-icon></bar-cell>
        <i></i>
        <bar-cell start class="named fav">Favoris<ui-icon name="star"></ui-icon></bar-cell>
        <bar-cell class="named">Période</bar-cell>
        <bar-cell class="named">Outils De Dessin</bar-cell>
        <bar-cell class="named">Indicateurs</bar-cell>
        <bar-cell class="named">Figures</bar-cell>
        <i></i>
        <bar-cell square><ui-icon name="fit"></ui-icon></bar-cell>
        <bar-cell square><ui-icon name="minus"></ui-icon></bar-cell>
        <bar-cell square><ui-icon name="add"></ui-icon></bar-cell>
        <bar-cell square on><ui-icon name="cross"></ui-icon></bar-cell>
        <bar-cell square on><ui-icon name="vresize"></ui-icon></bar-cell>
      </footer>`;
  }
}
customElements.define("chart-panel", ChartPanel);

// ---------- page ----------
const app = document.createElement("template");
app.innerHTML = `
  <style>
    :host { display: flex; flex-direction: column; height: 100vh; }
    main {
      flex: 1;
      min-height: 0;
      display: grid;
      grid-template-columns: 1fr 1fr;
      gap: 3px;
      margin-right: -2px;
      padding: 5px 0 18px 5px;
      background: linear-gradient(#daf3fc, #eceef0 60%);
    }
    .daily { --axis: #2fd316; --time-line: 16px; }
  </style>
  <app-header></app-header>
  <main>
    <chart-panel data="m30"></chart-panel>
    <chart-panel data="d1" class="daily"></chart-panel>
  </main>
`;
customElements.define(
  "trading-app",
  class TradingApp extends HTMLElement {
    constructor() {
      super();
      this.attachShadow({ mode: "open" }).appendChild(app.content.cloneNode(true));
    }
  }
);
</script>
</body>
</html>
